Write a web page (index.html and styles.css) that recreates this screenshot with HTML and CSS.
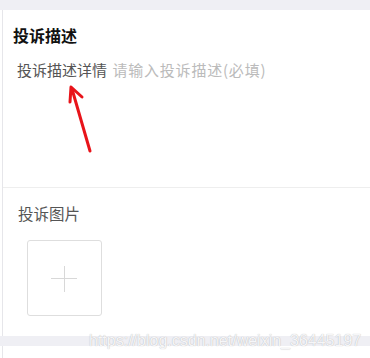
FILE: index.html
```html
<!DOCTYPE html>
<html lang="zh-CN">
<head>
    <meta charset="UTF-8">
    <meta name="viewport" content="width=device-width, initial-scale=1.0">
    <title>投诉</title>
    <link rel="stylesheet" href="styles.css">
</head>
<body>
    <div class="top-band"></div>

    <div class="content">
        <div class="desc-section">
            <h2 class="section-title">投诉描述</h2>
            <div class="desc-row">
                <span class="desc-label">投诉描述详情</span>
                <span class="desc-placeholder">请输入投诉描述(必填)</span>
            </div>
        </div>

        <div class="photo-section">
            <div class="photo-label">投诉图片</div>
            <div class="upload-box">
                <span class="plus-h"></span>
                <span class="plus-v"></span>
            </div>
        </div>

        <svg class="arrow" width="40" height="80" viewBox="0 0 40 80">
            <line x1="28" y1="72" x2="10" y2="10" stroke="#e8141a" stroke-width="3" stroke-linecap="round"/>
            <polyline points="8,23 9,8 20,18" fill="none" stroke="#e8141a" stroke-width="3" stroke-linecap="round" stroke-linejoin="round"/>
        </svg>
    </div>

    <div class="bottom-band"></div>
    <div class="footer"></div>

    <div class="watermark">https://blog.csdn.net/weixin_36445197</div>
</body>
</html>
```

FILE: styles.css
```css
body {
    margin: 0;
    padding: 0;
    background-color: #fff;
    font-family: "Noto Sans CJK SC", "Noto Sans", sans-serif;
    position: relative;
    width: 370px;
    height: 358px;
    overflow: hidden;
}

.top-band {
    height: 10px;
    background-color: #efeff4;
}

.content {
    position: relative;
    margin-left: 2px;
    border-left: 1px solid #e6e6ea;
    background-color: #fff;
}

.desc-section {
    height: 177px;
    border-bottom: 1px solid #eeeeee;
}

.section-title {
    margin: 0;
    padding: 14px 0 0 10px;
    font-size: 16px;
    line-height: 22px;
    font-weight: bold;
    color: #111;
}

.desc-row {
    margin-top: 13px;
    padding-left: 14px;
    font-size: 15px;
    line-height: 22px;
    white-space: nowrap;
}

.desc-label {
    color: #555;
}

.desc-placeholder {
    color: #bbb;
    margin-left: 2px;
    letter-spacing: 0.8px;
}

.photo-section {
    height: 148px;
    padding-left: 15px;
}

.photo-label {
    padding-top: 14px;
    font-size: 15.5px;
    line-height: 22px;
    color: #555;
}

.upload-box {
    position: relative;
    margin-top: 16px;
    margin-left: 9px;
    width: 73px;
    height: 74px;
    border: 1px solid #dedede;
    border-radius: 3px;
}

.plus-h {
    position: absolute;
    left: 23px;
    top: 37px;
    width: 26px;
    height: 1px;
    background-color: #d8d8d8;
}

.plus-v {
    position: absolute;
    left: 36px;
    top: 25px;
    width: 1px;
    height: 26px;
    background-color: #d8d8d8;
}

.arrow {
    position: absolute;
    left: 59px;
    top: 69px;
}

.bottom-band {
    height: 10px;
    background-color: #efeff4;
}

.footer {
    height: 12px;
    margin-left: 2px;
    border-left: 1px solid #e6e6ea;
}

.watermark {
    position: absolute;
    left: 89px;
    top: 331px;
    font-family: "Liberation Sans", Arial, sans-serif;
    font-size: 16px;
    line-height: 20px;
    color: #f6f6f8;
    text-shadow: 0 0 1px rgba(0, 0, 0, 0.3);
    white-space: nowrap;
}
```
